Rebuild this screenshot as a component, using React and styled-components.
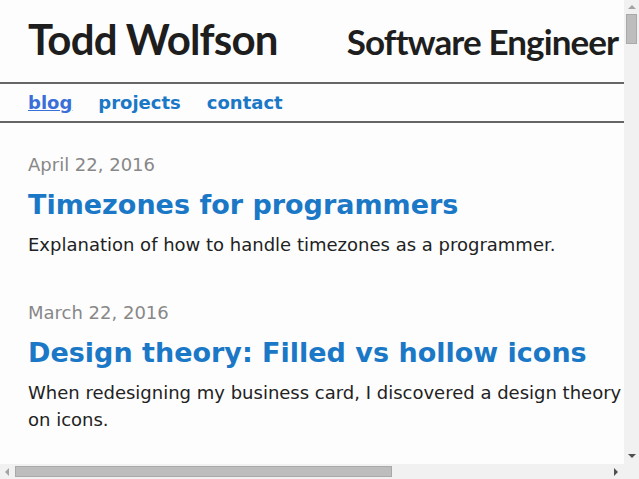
import React from 'react';
import styled, { createGlobalStyle } from 'styled-components';

const GlobalStyle = createGlobalStyle`
    html, body {
        margin: 0;
        padding: 0;
        background: #fdfdfd;
    }
    body {
        font-family: "DejaVu Sans", sans-serif;
        color: #222;
    }
`;

const Page = styled.div`
    width: 995px;
    min-height: 6800px;
`;

const Header = styled.header`
    display: flex;
    align-items: baseline;
    padding: 12px 0 0 28px;
    height: 70px;
    box-sizing: border-box;
    font-family: Lato, sans-serif;
    color: #1e1e1e;
`;

const Name = styled.h1`
    margin: 0;
    font-size: 42px;
    font-weight: 700;
    letter-spacing: -0.8px;
    line-height: 54px;
`;

const Role = styled.h2`
    margin: 0 0 0 69px;
    font-size: 35px;
    font-weight: 700;
    letter-spacing: -0.9px;
`;

const Nav = styled.nav`
    display: flex;
    gap: 26px;
    padding: 0 28px;
    height: 37px;
    align-items: center;
    border-top: 2px solid #666;
    border-bottom: 2px solid #666;
    margin-top: 12px;
`;

const NavLink = styled.a`
    font-weight: bold;
    font-size: 18px;
    color: ${(p) => (p.$active ? '#3b6fd8' : '#1b78c6')};
    text-decoration: ${(p) => (p.$active ? 'underline' : 'none')};
`;

const Main = styled.main`
    width: 596px;
    padding: 28px 0 0 28px;
`;

const Post = styled.article`
    margin-bottom: 41px;
`;

const PostDate = styled.div`
    color: #888;
    font-size: 18px;
    line-height: 27px;
`;

const PostTitle = styled.a`
    display: block;
    margin: 10px 0 9px;
    font-size: 27px;
    font-weight: bold;
    color: #1b78c6;
    text-decoration: none;
    line-height: 34px;
`;

const PostSummary = styled.p`
    margin: 0;
    font-size: 18px;
    line-height: 27px;
    color: #222;
`;

/* window scrollbars, drawn over the page */
const Track = styled.div`
    position: fixed;
    background: #f1f1f1;
    display: flex;
    align-items: center;
    box-sizing: border-box;
    ${(p) => (p.$vertical
        ? 'top: 0; right: 0; width: 15px; height: calc(100vh - 15px); flex-direction: column; padding: 5px 0 6px;'
        : 'left: 0; bottom: 0; height: 15px; width: calc(100vw - 15px); padding: 0 6px 0 5px;')}
`;

const Corner = styled.div`
    position: fixed;
    right: 0;
    bottom: 0;
    width: 15px;
    height: 15px;
    background: #f1f1f1;
`;

const Thumb = styled.div`
    background: #bdbdbd;
    border: 1px solid #a9a9a9;
    box-sizing: border-box;
    ${(p) => (p.$vertical
        ? 'width: 11px; height: 30px; margin-top: 5px;'
        : 'height: 11px; width: 377px; margin-left: 6px;')}
`;

const Spacer = styled.div`
    flex: 1;
`;

const Arrow = styled.div`
    width: 0;
    height: 0;
    border: 4px solid transparent;
    ${(p) => p.$dir === 'up' && `border-bottom-color: ${p.$color}; border-top-width: 0;`}
    ${(p) => p.$dir === 'down' && `border-top-color: ${p.$color}; border-bottom-width: 0;`}
    ${(p) => p.$dir === 'left' && `border-right-color: ${p.$color}; border-left-width: 0;`}
    ${(p) => p.$dir === 'right' && `border-left-color: ${p.$color}; border-right-width: 0;`}
`;

const posts = [
    {
        date: 'April 22, 2016',
        title: 'Timezones for programmers',
        summary: 'Explanation of how to handle timezones as a programmer.',
    },
    {
        date: 'March 22, 2016',
        title: 'Design theory: Filled vs hollow icons',
        summary: 'When redesigning my business card, I discovered a design theory on icons.',
    },
    {
        date: 'February 10, 2016',
        title: 'Writing a blog engine',
        summary: 'Notes on building a small static blog.',
    },
];

export default function App() {
    return (
        <Page>
            <GlobalStyle />
            <Header>
                <Name>Todd Wolfson</Name>
                <Role>Software Engineer</Role>
            </Header>
            <Nav>
                <NavLink href="#" $active>blog</NavLink>
                <NavLink href="#">projects</NavLink>
                <NavLink href="#">contact</NavLink>
            </Nav>
            <Main>
                {posts.map((post) => (
                    <Post key={post.title}>
                        <PostDate>{post.date}</PostDate>
                        <PostTitle href="#">{post.title}</PostTitle>
                        <PostSummary>{post.summary}</PostSummary>
                    </Post>
                ))}
            </Main>
            <Track $vertical>
                <Arrow $dir="up" $color="#a3a3a3" />
                <Thumb $vertical />
                <Spacer />
                <Arrow $dir="down" $color="#505050" />
            </Track>
            <Track>
                <Arrow $dir="left" $color="#a3a3a3" />
                <Thumb />
                <Spacer />
                <Arrow $dir="right" $color="#505050" />
            </Track>
            <Corner />
        </Page>
    );
}
